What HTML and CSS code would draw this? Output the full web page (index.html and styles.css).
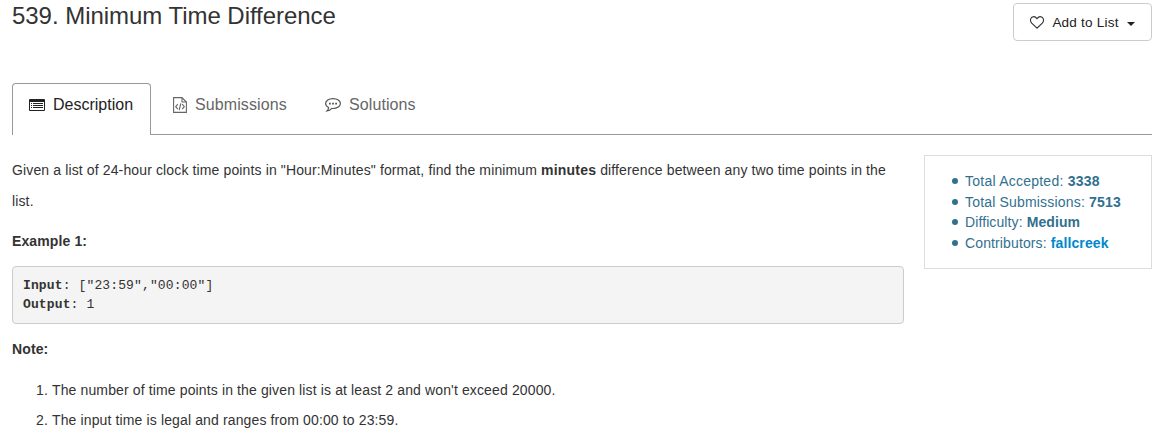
FILE: index.html
```html
<!DOCTYPE html>
<html lang="en">
<head>
<meta charset="utf-8">
<title>Minimum Time Difference</title>
<link rel="stylesheet" href="styles.css">
</head>
<body>
<header class="head">
  <h1 class="title">539. Minimum Time Difference</h1>
  <button class="add" type="button">
    <svg class="heart" width="14" height="13" viewBox="0 0 14 13"><path d="M7 12.200 1.700 7.100C-.6 4.500.6.6 3.800.6 5.500.6 6.400 1.800 7 2.600 7.600 1.800 8.500.6 10.200.6 13.400.6 14.600 4.500 12.300 7.100Z" fill="none" stroke="#333" stroke-width="1.1"/></svg>
    <span class="add-text">Add to List</span>
    <span class="caret"></span>
  </button>
</header>
<nav class="tabs">
  <a class="tab active"><svg class="icon" width="16" height="12" viewBox="0 0 16 12"><path fill="#222" fill-rule="evenodd" d="M1 0H15Q16 0 16 1V11Q16 12 15 12H1Q0 12 0 11V1Q0 0 1 0ZM1 3V10.500Q1 11 1.500 11H14.500Q15 11 15 10.500V3Z"/><path d="M2 4.500H3M2 6.500H3M2 8.500H3M4 4.500H14M4 6.500H14M4 8.500H14" stroke="#222"/></svg><span class="t-desc">Description</span></a>
  <a class="tab sub"><svg class="icon" width="14" height="16" viewBox="0 0 14 16"><path d="M.6.6H9L13.400 5V15.400H.6ZM9 .6V5H13.400M4.800 7.200 2.700 9.700 4.800 12.200M9.200 7.200 11.300 9.700 9.200 12.200M7.800 6.500 6.200 13" fill="none" stroke="#666" stroke-width="1.100"/></svg><span class="t-sub">Submissions</span></a>
  <a class="tab sol"><svg class="icon" width="16" height="14" viewBox="0 0 16 14"><path d="M8 .6C12.200.6 15.400 2.800 15.400 5.600S12.200 10.500 8 10.500L6.800 10.400Q4.800 12.700 2 13Q3.500 11.600 3.600 9.500C1.700 8.600.6 7.200.6 5.600.6 2.800 3.800.6 8 .6Z" fill="none" stroke="#555" stroke-width="1.200"/><path d="M4 4.700H5.800V6.500H4ZM7.100 4.700H8.900V6.500H7.100ZM10.200 4.700H12V6.500H10.200Z" fill="#555"/></svg><span class="t-sol">Solutions</span></a>
  <span class="rule"></span>
</nav>
<main class="main">
  <article class="body">
    <p class="para"><span class="p-a">Given a list of 24-hour clock time points in "Hour:Minutes" format, find the minimum </span><b class="p-b">minutes</b><span class="p-c"> difference between any two time points in the</span><br>list.</p>
    <p class="label example"><b>Example 1:</b></p>
<pre class="code"><b>Input</b>: ["23:59","00:00"]
<b>Output</b>: 1</pre>
    <p class="label note"><b>Note:</b></p>
    <ol class="notes">
      <li><span class="n1">The number of time points in the given list is at least 2 and won't exceed 20000.</span></li>
      <li><span class="n2">The input time is legal and ranges from 00:00 to 23:59.</span></li>
    </ol>
  </article>
  <aside class="side">
    <ul class="stats">
      <li class="accepted">Total Accepted: <b>3338</b></li>
      <li class="submitted">Total Submissions: <b>7513</b></li>
      <li class="difficulty">Difficulty: <b>Medium</b></li>
      <li class="contributors">Contributors: <b class="link">fallcreek</b></li>
    </ul>
  </aside>
</main>
</body>
</html>
```

FILE: styles.css
```css
* { box-sizing: border-box; }
body {
  margin: 0;
  padding: 0 17px 0 12px;
  height: 437px;
  overflow: hidden;
  background: #fff;
  color: #333;
  font: 14px "Liberation Sans", Arial, sans-serif;
}
.head { display: flex; justify-content: space-between; height: 83px; }
.title { margin: 0; font-size: 24px; font-weight: 400; line-height: 32px; letter-spacing: -.04px; white-space: nowrap; }
.add {
  display: flex;
  align-items: center;
  width: 139px;
  height: 38px;
  margin-top: 3px;
  padding: 0 0 0 16px;
  border: 1px solid #ccc;
  border-radius: 4px;
  background: #fff;
  color: #222;
  font: 13.5px "Liberation Sans", Arial, sans-serif;
}
.add-text { width: 67px; margin-left: 8px; letter-spacing: .22px; white-space: nowrap; }
.caret { margin: 3px 0 0 8px; border: 4px solid transparent; border-top-color: #222; border-bottom: 0; }
.tabs { display: flex; height: 52px; font-size: 16px; }
.tab { display: flex; align-items: center; height: 52px; padding-bottom: 8px; border-bottom: 1px solid #999; color: #666; white-space: nowrap; }
.active { width: 139px; padding: 0 0 10px 16px; border: 1px solid #999; border-bottom: 0; border-radius: 4px 4px 0 0; color: #222; }
.sub { width: 151px; padding-left: 22px; }
.sol { width: 130px; padding-left: 23px; }
.t-sub, .t-sol { letter-spacing: .1px; }
.rule { flex: 1; border-bottom: 1px solid #999; }
.icon { flex: none; margin-right: 8px; }
.main { display: flex; justify-content: space-between; align-items: flex-start; padding-top: 20px; }
.body { width: 892px; }
.para { margin: 0; line-height: 31px; letter-spacing: .13px; white-space: nowrap; }
.p-b { letter-spacing: .2px; }
.label { margin: 0; line-height: 20px; letter-spacing: .12px; }
.example { margin-top: 14px; }
.code {
  height: 58px;
  margin: 15px 0 0;
  padding: 9px 10px;
  border: 1px solid #ccc;
  border-radius: 4px;
  background: #f4f4f4;
  font: 13px/19px "Liberation Mono", monospace;
  letter-spacing: .13px;
}
.note { margin-top: 15px; }
.notes { margin: 16px 0 0; padding-left: 40px; line-height: 30px; letter-spacing: .13px; white-space: nowrap; }
.side { width: 228px; height: 114px; padding: 15px 0 0 27px; border: 1px solid #ddd; color: #31708f; }
.stats { margin: 0; padding: 0; line-height: 20.6px; list-style: none; white-space: nowrap; }
.stats li { display: flex; align-items: center; white-space: pre; }
.stats li::before { content: ""; width: 6px; height: 6px; margin-right: 7px; border-radius: 50%; background: #31708f; }
.accepted { letter-spacing: .24px; }
.submitted { letter-spacing: .18px; }
.difficulty { letter-spacing: .1px; }
.contributors { letter-spacing: .12px; }
.link { color: #08c; }
```
